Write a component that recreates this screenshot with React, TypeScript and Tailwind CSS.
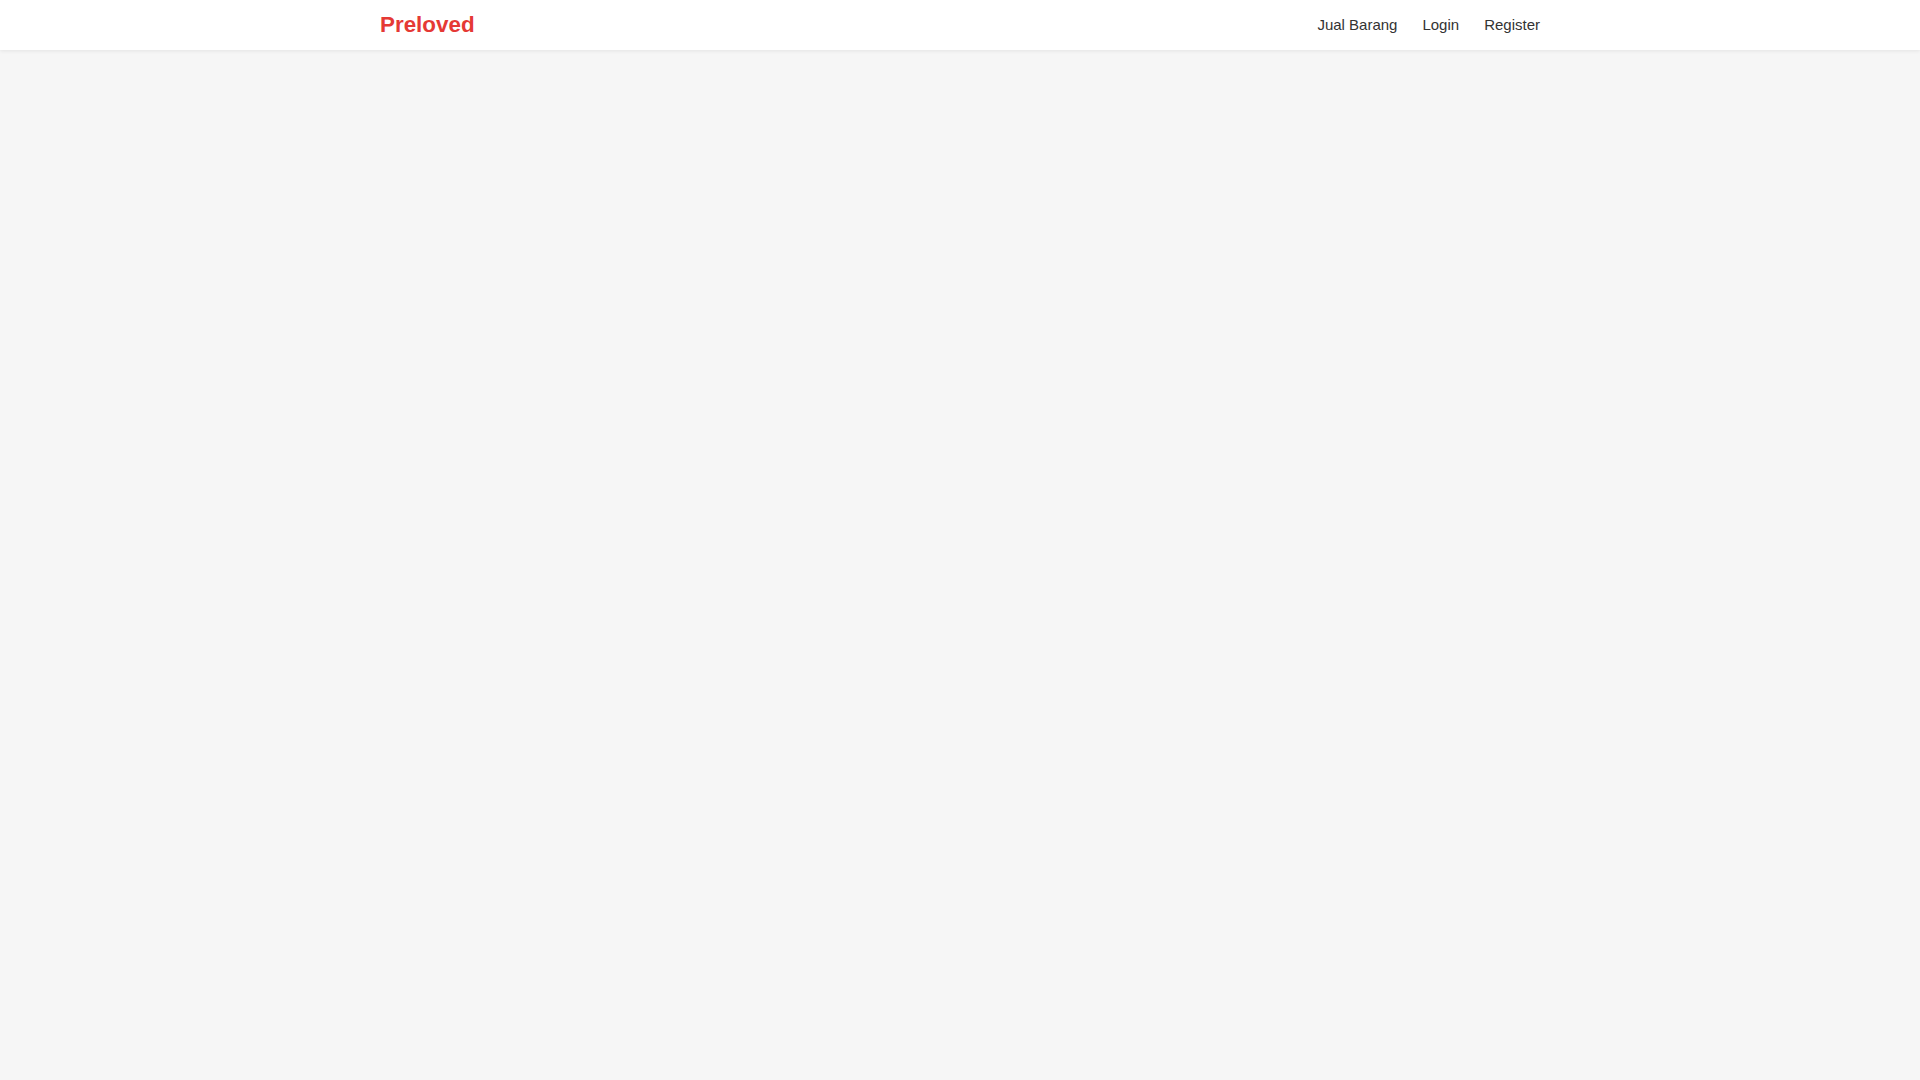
export default function App() {
  return (
    <div className="min-h-screen bg-[#f6f6f6]" style={{ fontFamily: '"Liberation Sans", Arial, sans-serif' }}>
      <header className="h-[50px] bg-white shadow-[0_1px_4px_rgba(0,0,0,0.08)]">
        <div className="mx-auto flex h-full w-[1160px] items-center justify-between">
          <a className="pt-[1px] text-[22.4px] font-bold leading-none text-[#e53935]">Preloved</a>
          <nav className="flex items-center gap-[25px] pt-[1px] text-[15px] text-[#333333]">
            <a>Jual Barang</a>
            <a>Login</a>
            <a>Register</a>
          </nav>
        </div>
      </header>
    </div>
  );
}
